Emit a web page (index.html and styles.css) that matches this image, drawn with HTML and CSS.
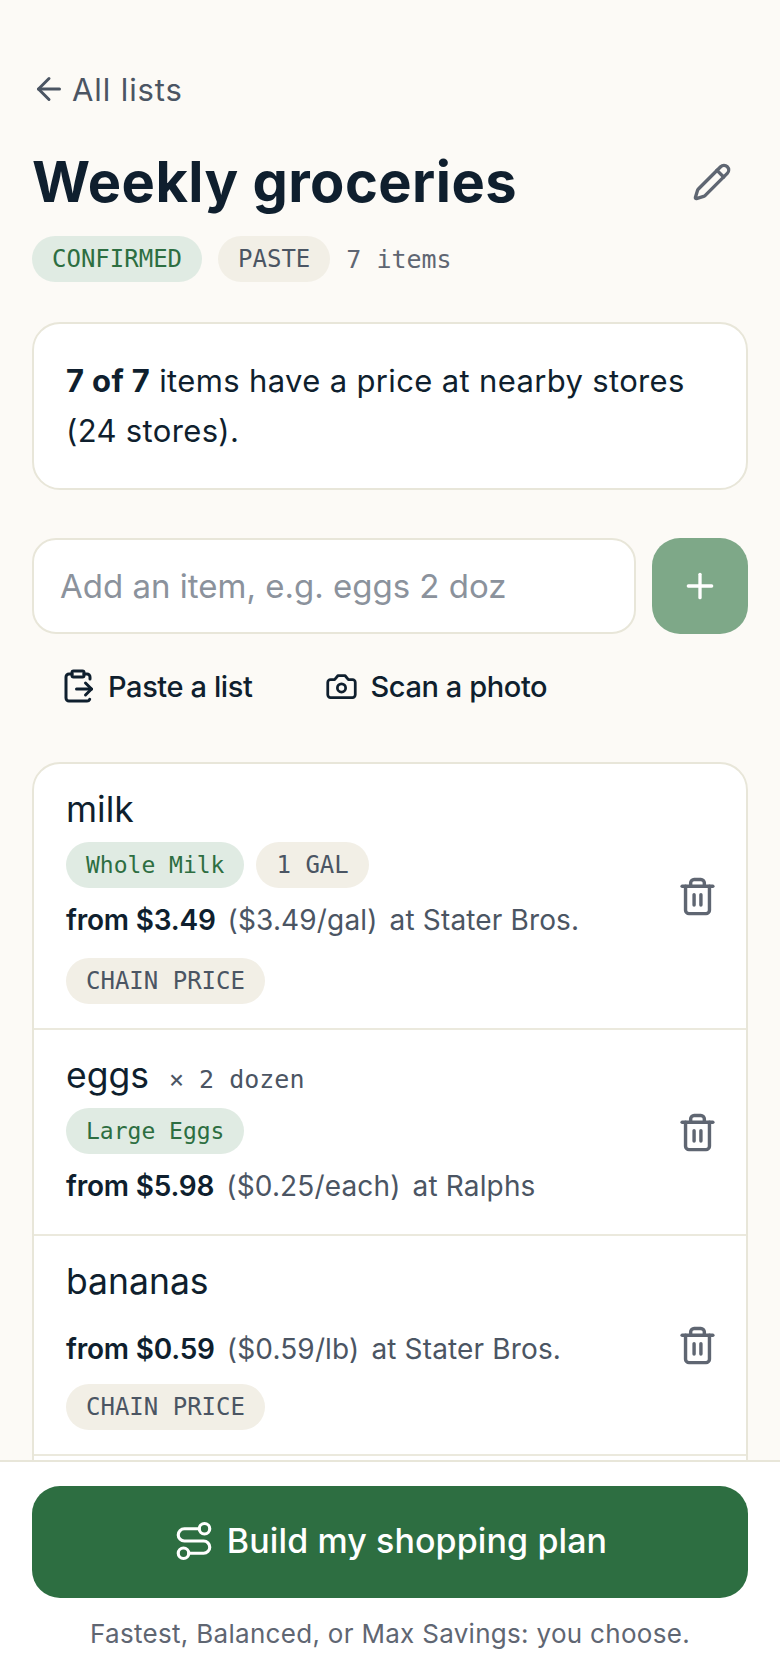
FILE: index.html
```html
<!DOCTYPE html>
<html lang="en">
<head>
  <meta charset="UTF-8">
  <title>Weekly groceries</title>
  <meta name="viewport" content="width=device-width, initial-scale=1">
  <link rel="stylesheet" href="styles.css">
</head>
<body>
  <main class="page">
    <a class="back-link" href="#">
      <svg class="icon icon-back" viewBox="0 0 24 24"><path d="m12 19-7-7 7-7"/><path d="M19 12H5"/></svg>
      All lists
    </a>

    <header class="title-row">
      <h1>Weekly groceries</h1>
      <button class="icon-btn" aria-label="Rename">
        <svg class="icon icon-lg" viewBox="0 0 24 24"><path d="M21.174 6.812a1 1 0 0 0-3.986-3.987L3.842 16.174a2 2 0 0 0-.5.83l-1.321 4.352a.5.5 0 0 0 .623.622l4.353-1.32a2 2 0 0 0 .83-.497z"/><path d="m15 5 4 4"/></svg>
      </button>
    </header>

    <div class="meta-row">
      <span class="pill pill-green pill-caps">CONFIRMED</span>
      <span class="pill pill-tan pill-caps">PASTE</span>
      <span class="meta-count">7 items</span>
    </div>

    <section class="coverage-card">
      <b>7 of 7</b> items have a price at nearby stores (24 stores).
    </section>

    <form class="add-row">
      <input class="add-input" type="text" placeholder="Add an item, e.g. eggs 2 doz">
      <button class="add-btn" type="button" aria-label="Add">
        <svg class="icon icon-lg" viewBox="0 0 24 24"><path d="M5 12h14"/><path d="M12 5v14"/></svg>
      </button>
    </form>

    <div class="actions">
      <a class="action" href="#">
        <svg class="icon icon-md" viewBox="0 0 24 24"><rect x="8" y="2" width="8" height="4" rx="1"/><path d="M8 4H6a2 2 0 0 0-2 2v14a2 2 0 0 0 2 2h12a2 2 0 0 0 1.793-1.113"/><path d="M16 4h2a2 2 0 0 1 2 2v1.344"/><path d="M11 14h10"/><path d="m17 18 4-4-4-4"/></svg>
        Paste a list
      </a>
      <a class="action" href="#">
        <svg class="icon icon-cam" viewBox="0 0 24 24"><path d="M14.5 4h-5L7 7H4a2 2 0 0 0-2 2v9a2 2 0 0 0 2 2h16a2 2 0 0 0 2-2V9a2 2 0 0 0-2-2h-3l-2.5-3z"/><circle cx="12" cy="13" r="3"/></svg>
        Scan a photo
      </a>
    </div>

    <ul class="items">
      <li class="item">
        <div class="item-body">
          <div class="item-name">milk</div>
          <div class="item-tags">
            <span class="pill pill-green">Whole Milk</span>
            <span class="pill pill-tan pill-caps">1 GAL</span>
          </div>
          <div class="item-price"><b>from $3.49</b><span>($3.49/gal)</span><span>at Stater Bros.</span></div>
          <div class="item-foot"><span class="pill pill-tan pill-caps">CHAIN PRICE</span></div>
        </div>
        <button class="icon-btn item-delete" aria-label="Delete">
          <svg class="icon icon-trash" viewBox="0 0 24 24"><path d="M3 6h18"/><path d="M19 6v14c0 1-1 2-2 2H7c-1 0-2-1-2-2V6"/><path d="M8 6V4c0-1 1-2 2-2h4c1 0 2 1 2 2v2"/><path d="M10 11v6"/><path d="M14 11v6"/></svg>
        </button>
      </li>
      <li class="item">
        <div class="item-body">
          <div class="item-name">eggs <span class="item-qty">× 2 dozen</span></div>
          <div class="item-tags">
            <span class="pill pill-green">Large Eggs</span>
          </div>
          <div class="item-price"><b>from $5.98</b><span>($0.25/each)</span><span>at Ralphs</span></div>
        </div>
        <button class="icon-btn item-delete" aria-label="Delete">
          <svg class="icon icon-trash" viewBox="0 0 24 24"><path d="M3 6h18"/><path d="M19 6v14c0 1-1 2-2 2H7c-1 0-2-1-2-2V6"/><path d="M8 6V4c0-1 1-2 2-2h4c1 0 2 1 2 2v2"/><path d="M10 11v6"/><path d="M14 11v6"/></svg>
        </button>
      </li>
      <li class="item">
        <div class="item-body">
          <div class="item-name">bananas</div>
          <div class="item-price item-price-solo"><b>from $0.59</b><span>($0.59/lb)</span><span>at Stater Bros.</span></div>
          <div class="item-foot item-foot-solo"><span class="pill pill-tan pill-caps">CHAIN PRICE</span></div>
        </div>
        <button class="icon-btn item-delete" aria-label="Delete">
          <svg class="icon icon-trash" viewBox="0 0 24 24"><path d="M3 6h18"/><path d="M19 6v14c0 1-1 2-2 2H7c-1 0-2-1-2-2V6"/><path d="M8 6V4c0-1 1-2 2-2h4c1 0 2 1 2 2v2"/><path d="M10 11v6"/><path d="M14 11v6"/></svg>
        </button>
      </li>
      <li class="item item-more"></li>
    </ul>
  </main>

  <footer class="plan-bar">
    <button class="plan-btn">
      <svg class="icon icon-route" viewBox="0 0 24 24"><circle cx="6" cy="19" r="3"/><path d="M9 19h8.5a3.5 3.5 0 0 0 0-7h-11a3.5 3.5 0 0 1 0-7H15"/><circle cx="18" cy="5" r="3"/></svg>
      Build my shopping plan
    </button>
    <p class="plan-note">Fastest, Balanced, or Max Savings: you choose.</p>
  </footer>
</body>
</html>
```

FILE: styles.css
```css
* { box-sizing: border-box; }
html, body {
  height: 100%;
  margin: 0;
}
body {
  display: flex;
  flex-direction: column;
  overflow: hidden;
  background-color: #fcfaf6;
  color: #0f1f2e;
  font-family: Inter, "Noto Sans", sans-serif;
}
button {
  font-family: inherit;
  border: none;
  background: none;
  cursor: pointer;
  padding: 0;
}
.icon {
  display: block;
  flex: none;
  fill: none;
  stroke: currentColor;
  stroke-width: 2;
  stroke-linecap: round;
  stroke-linejoin: round;
}
.icon-back { width: 36px; height: 36px; }
.icon-md { width: 36px; height: 36px; }
.icon-cam { width: 33px; height: 33px; }
.icon-lg { width: 40px; height: 40px; }
.icon-trash { width: 41px; height: 41px; }
.icon-route { width: 42px; height: 42px; stroke-width: 1.8; }

.page {
  flex: 1;
  min-height: 0;
  overflow: hidden;
  padding: 69px 32px 0;
}
.back-link {
  display: flex;
  align-items: center;
  gap: 5px;
  height: 40px;
  margin-left: -1px;
  color: #4b5563;
  font-size: 31px;
  letter-spacing: 0.9px;
  text-decoration: none;
}
.title-row {
  display: flex;
  align-items: center;
  justify-content: space-between;
  margin-top: 37px;
  padding-right: 16px;
}
.title-row h1 {
  margin: 0;
  font-size: 56px;
  line-height: 72px;
  font-weight: 700;
  letter-spacing: 0.45px;
}
.icon-btn {
  color: #5f6672;
}
.meta-row {
  display: flex;
  align-items: center;
  gap: 16px;
  margin-top: 18px;
}
.pill {
  display: inline-block;
  height: 46px;
  padding: 0 20px;
  border-radius: 23px;
  font-family: "DejaVu Sans Mono", monospace;
  font-size: 23px;
  line-height: 46px;
  white-space: nowrap;
}
.pill-caps {
  font-size: 24px;
}
.pill-green {
  background-color: #e0ebe3;
  color: #2d6e41;
}
.pill-tan {
  background-color: #f2efe6;
  color: #4b5563;
}
.meta-count {
  font-family: "DejaVu Sans Mono", monospace;
  font-size: 25px;
  color: #5f6672;
}
.coverage-card {
  margin-top: 40px;
  padding: 32px 32px;
  background-color: #fff;
  border: 2px solid #e8e6d9;
  border-radius: 28px;
  font-size: 31px;
  line-height: 50px;
  letter-spacing: 0.35px;
}
.add-row {
  display: flex;
  gap: 16px;
  margin-top: 48px;
}
.add-input {
  flex: 1;
  min-width: 0;
  height: 96px;
  padding: 0 26px;
  background-color: #fff;
  border: 2px solid #e8e6d9;
  border-radius: 24px;
  font-family: inherit;
  font-size: 33px;
  color: #0f1f2e;
}
.add-input::placeholder {
  color: #8b929c;
  opacity: 1;
}
.add-btn {
  display: flex;
  align-items: center;
  justify-content: center;
  width: 96px;
  height: 96px;
  border-radius: 28px;
  background-color: #7ea888;
  color: #fff;
}
.actions {
  display: flex;
  gap: 73px;
  margin-top: 24px;
  padding: 0 28px;
}
.action {
  display: flex;
  align-items: center;
  gap: 12px;
  height: 56px;
  color: #0f1f2e;
  font-size: 29px;
  font-weight: 500;
  letter-spacing: -0.4px;
  text-decoration: none;
}
.items {
  list-style: none;
  margin: 48px 0 0;
  padding: 0;
  background-color: #fff;
  border: 2px solid #e8e6d9;
  border-radius: 28px;
}
.item {
  display: flex;
  align-items: center;
  gap: 16px;
  padding: 23px 28px 28px 32px;
  border-bottom: 2px solid #ebe9dd;
}
.item-more {
  height: 60px;
  border-bottom: none;
}
.item-body {
  flex: 1;
  min-width: 0;
}
.item-delete {
  margin-top: 5px;
}
.item-name {
  font-size: 35.5px;
  line-height: 46px;
}
.item-qty {
  margin-left: 10px;
  font-family: "DejaVu Sans Mono", monospace;
  font-size: 25px;
  line-height: 1;
  color: #4b5563;
}
.item-tags {
  display: flex;
  gap: 12px;
  margin-top: 9px;
}
.item-price {
  display: flex;
  gap: 12px;
  margin-top: 12px;
  font-size: 28px;
  line-height: 40px;
  letter-spacing: 0.15px;
  color: #4b5563;
}
.item-price b {
  color: #0f1f2e;
  font-weight: 600;
  letter-spacing: -0.2px;
}
.item-price-solo {
  margin-top: 24px;
}
.item-foot {
  margin-top: 18px;
  margin-bottom: -4px;
}
.item-foot-solo {
  margin-top: 15px;
  margin-bottom: -4px;
}
.plan-bar {
  flex: none;
  padding: 24px 32px 4px;
  background-color: #fff;
  border-top: 2px solid #e8e6d9;
}
.plan-btn {
  display: flex;
  align-items: center;
  justify-content: center;
  gap: 12px;
  width: 100%;
  height: 112px;
  padding-bottom: 3px;
  border-radius: 28px;
  background-color: #2d6e41;
  color: #fff;
  font-size: 34px;
  font-weight: 500;
  letter-spacing: 0.1px;
}
.plan-note {
  margin: 18px 0 0;
  text-align: center;
  font-size: 26px;
  line-height: 36px;
  letter-spacing: 0.3px;
  color: #5f6672;
}
```
